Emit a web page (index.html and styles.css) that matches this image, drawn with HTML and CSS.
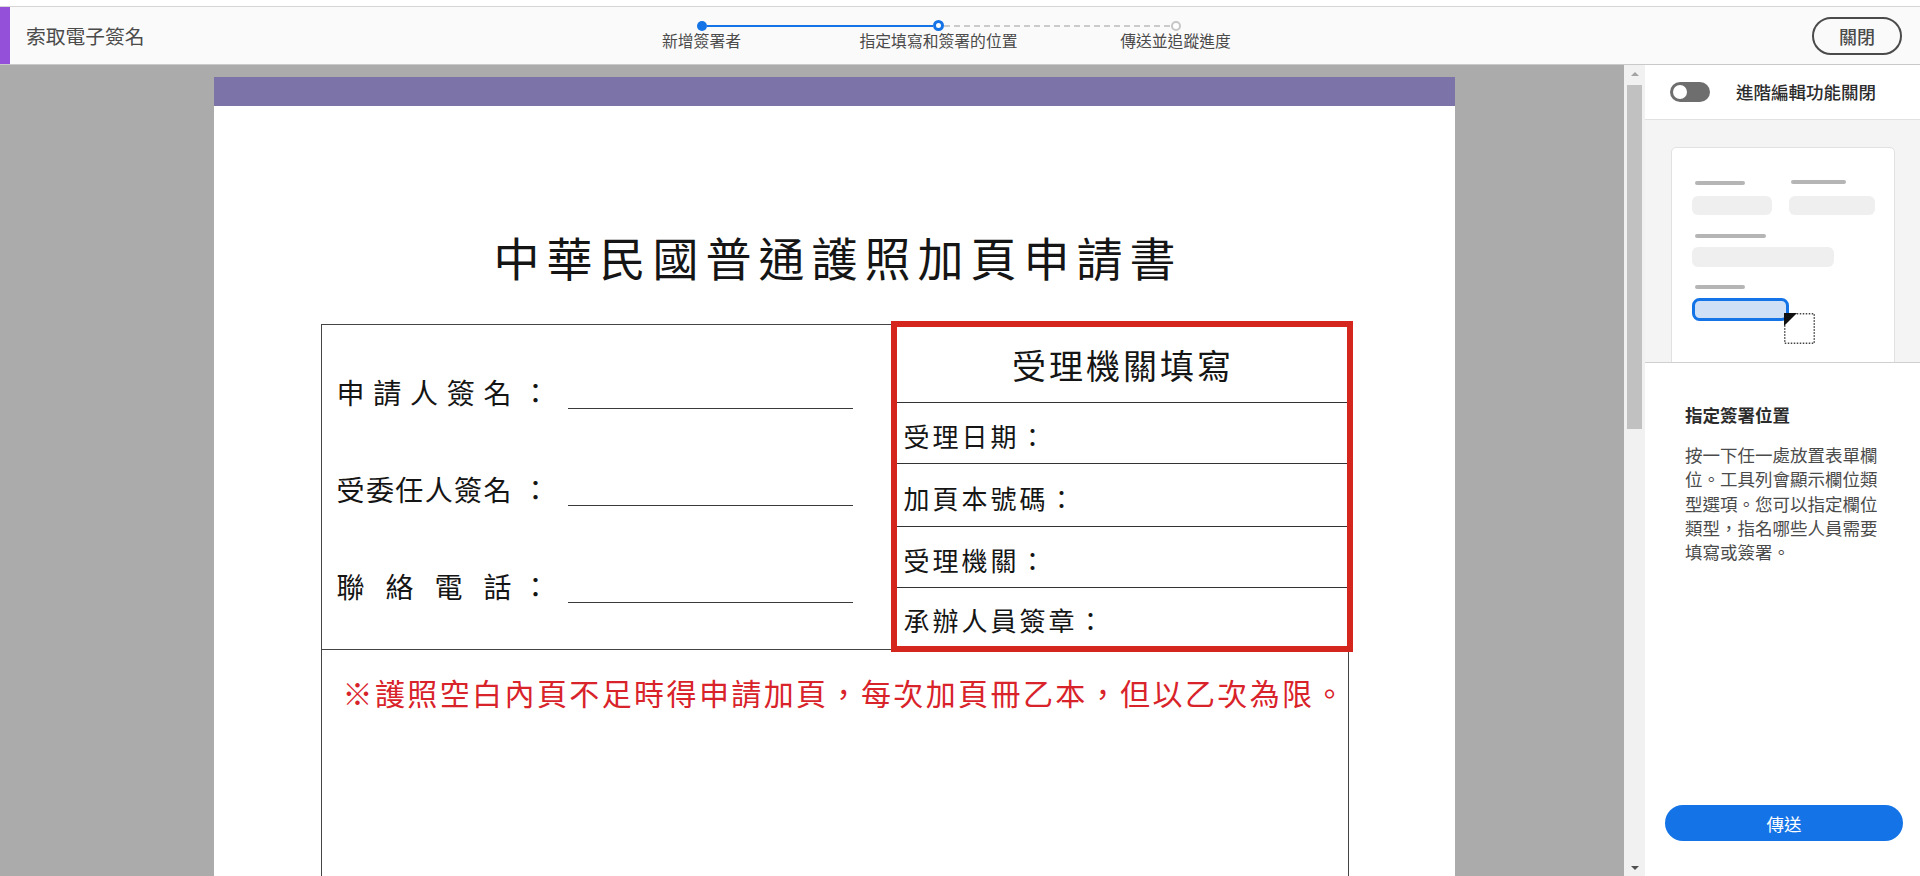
FILE: index.html
```html
<!DOCTYPE html>
<html lang="zh-Hant">
<head>
<meta charset="utf-8">
<title>索取電子簽名</title>
<link rel="stylesheet" href="styles.css">
</head>
<body>
<header class="appbar">
  <div class="brand">
    <span class="accent"></span>
    <span class="app-title">索取電子簽名</span>
  </div>
  <nav class="stepper">
    <div class="track">
      <span class="dot done"></span>
      <span class="seg solid"></span>
      <span class="dot current"></span>
      <span class="seg dashed"></span>
      <span class="dot todo"></span>
    </div>
    <div class="labels">
      <span>新增簽署者</span>
      <span>指定填寫和簽署的位置</span>
      <span>傳送並追蹤進度</span>
    </div>
  </nav>
  <button class="close-btn">關閉</button>
</header>

<main class="workspace">
  <section class="viewer">
    <div class="page">
      <h1 class="doc-title">中華民國普通護照加頁申請書</h1>
      <div class="form-table">
        <div class="form-top">
          <div class="sign-cell">
            <div class="sign-row">
              <span class="sign-label">申請人簽名</span><span class="colon">：</span><span class="sign-line"></span>
            </div>
            <div class="sign-row">
              <span class="sign-label">受委任人簽名</span><span class="colon">：</span><span class="sign-line"></span>
            </div>
            <div class="sign-row">
              <span class="sign-label">聯絡電話</span><span class="colon">：</span><span class="sign-line"></span>
            </div>
          </div>
          <div class="agency">
            <div class="agency-head">受理機關填寫</div>
            <div class="agency-row r1">受理日期：</div>
            <div class="agency-row r2">加頁本號碼：</div>
            <div class="agency-row r3">受理機關：</div>
            <div class="agency-row r4">承辦人員簽章：</div>
          </div>
        </div>
        <div class="notes">※護照空白內頁不足時得申請加頁，每次加頁冊乙本，但以乙次為限。</div>
      </div>
    </div>
  </section>

  <div class="scrollbar">
    <div class="sb-btn"><span class="arrow-up"></span></div>
    <div class="sb-thumb"></div>
    <div class="sb-space"></div>
    <div class="sb-btn"><span class="arrow-down"></span></div>
  </div>

  <aside class="panel">
    <div class="toggle-row">
      <span class="switch"><span class="knob"></span></span>
      <span class="toggle-label">進階編輯功能關閉</span>
    </div>
    <div class="preview">
      <div class="preview-card">
        <svg width="222" height="258" viewBox="1 1 222 258" xmlns="http://www.w3.org/2000/svg">
          <rect x="24" y="34" width="50" height="4" rx="2" fill="#b5b5b5"/>
          <rect x="120" y="33" width="55" height="4" rx="2" fill="#b5b5b5"/>
          <rect x="21" y="49" width="80" height="19" rx="6" fill="#efefef"/>
          <rect x="118" y="49" width="86" height="19" rx="6" fill="#efefef"/>
          <rect x="24" y="87" width="71" height="4" rx="2" fill="#b5b5b5"/>
          <rect x="21" y="100" width="142" height="20" rx="6" fill="#efefef"/>
          <rect x="24" y="138" width="50" height="4" rx="2" fill="#b5b5b5"/>
          <rect x="22.5" y="152.5" width="94" height="20" rx="6" fill="#cfe0f6" stroke="#1473e6" stroke-width="3"/>
          <rect x="113.75" y="166.75" width="29.5" height="29.5" fill="#ffffff" stroke="#444" stroke-width="1.5" stroke-dasharray="1.5 1.5"/>
          <polygon points="113,166 126,166 113,179" fill="#111"/>
        </svg>
      </div>
    </div>
    <div class="info">
      <div class="info-title">指定簽署位置</div>
      <p class="info-text">按一下任一處放置表單欄位。工具列會顯示欄位類型選項。您可以指定欄位類型，指名哪些人員需要填寫或簽署。</p>
      <button class="send-btn">傳送</button>
    </div>
  </aside>
</main>
</body>
</html>
```

FILE: styles.css
```css
* { box-sizing: border-box; }

html, body {
  margin: 0;
  padding: 0;
  background: #ffffff;
  font-family: "Noto Sans CJK TC", "Noto Sans", "Liberation Sans", sans-serif;
  overflow: hidden;
  height: 876px;
}

/* ---------- top bar ---------- */
.appbar {
  margin-top: 6px;
  height: 59px;
  border-top: 1px solid #d6d6d6;
  border-bottom: 1px solid #c9c9c9;
  background: #fafafa;
  display: grid;
  grid-template-columns: 583px 711px 1fr;
}

.brand {
  display: flex;
  align-items: center;
}

.accent {
  width: 10px;
  align-self: stretch;
  background: #9550da;
}

.app-title {
  margin-left: 16px;
  font-size: 19.75px;
  color: #4b4b4b;
  line-height: 24px;
}

.stepper {
  padding-top: 13px;
}

.track {
  display: flex;
  align-items: center;
  height: 11px;
  padding: 0 113.5px;
}

.dot {
  width: 10px;
  height: 10px;
  border-radius: 50%;
  flex: none;
}

.dot.done { background: #1473e6; }

.dot.current {
  width: 11px;
  height: 11px;
  border: 3px solid #1473e6;
  background: #ffffff;
}

.dot.todo {
  border: 2px solid #c6c6c6;
  background: #ffffff;
}

.seg {
  flex: 1;
  height: 2px;
}

.seg.solid { background: #1473e6; }

.seg.dashed {
  background: repeating-linear-gradient(90deg, #cbcbcb 0 6px, transparent 6px 10px);
}

.labels {
  display: grid;
  grid-template-columns: repeat(3, 1fr);
  text-align: center;
  font-size: 15.8px;
  line-height: 20px;
  color: #4b4b4b;
}

.close-btn {
  justify-self: end;
  align-self: center;
  margin-right: 18px;
  width: 90px;
  height: 38px;
  border: 2px solid #4b4b4b;
  border-radius: 19px;
  background: transparent;
  color: #4b4b4b;
  font-family: inherit;
  font-size: 18px;
  font-weight: 500;
  padding: 0;
}

/* ---------- workspace ---------- */
.workspace {
  display: flex;
  height: 811px;
}

.viewer {
  flex: 1;
  background: #ababab;
  overflow: hidden;
  padding: 12px 0 0 214px;
}

.page {
  width: 1241px;
  height: 1400px;
  background: #ffffff;
  border-top: 29px solid #7c73a8;
  color: #151515;
  overflow: hidden;
}

.doc-title {
  margin: 120px 0 0;
  font-size: 46px;
  font-weight: 400;
  line-height: 60px;
  letter-spacing: 7px;
  padding-left: 7px;
  text-align: center;
}

.form-table {
  width: 1028px;
  margin: 38px auto 0;
  border: 1px solid #444444;
  border-bottom: none;
}

.form-top {
  display: grid;
  grid-template-columns: 569px 1fr;
  grid-template-rows: 324px;
  border-bottom: 1px solid #444444;
}

.sign-cell {
  padding: 18px 0 0 15px;
}

.sign-row {
  height: 97px;
  display: flex;
  align-items: center;
  font-size: 28px;
  line-height: 34px;
}

.sign-label {
  width: 175px;
  text-align: justify;
  text-align-last: justify;
  white-space: nowrap;
}

.colon {
  width: 28px;
  margin-left: 10px;
  text-align: center;
}

.sign-line {
  width: 285px;
  height: 34px;
  margin-left: 18px;
  border-bottom: 1.5px solid #3a3a3a;
}

.agency {
  margin: -4px -5px -3px 0;
  border: 6px solid #d4261d;
  display: flex;
  flex-direction: column;
  background: #ffffff;
}

.agency-head {
  height: 76px;
  border-bottom: 1px solid #333333;
  display: flex;
  align-items: center;
  justify-content: center;
  font-size: 34px;
  letter-spacing: 3px;
  padding-left: 3px;
}

.agency-row {
  display: flex;
  align-items: center;
  padding: 5px 0 0 7px;
  font-size: 26px;
  letter-spacing: 3px;
  border-bottom: 1px solid #333333;
  white-space: nowrap;
}

.agency-row.r1 { height: 61px; }
.agency-row.r2 { height: 63px; }
.agency-row.r3 { height: 61px; }
.agency-row.r4 { flex: 1; border-bottom: none; }

.notes {
  height: 600px;
  padding: 24px 0 0 21px;
  font-size: 30px;
  line-height: 36px;
  letter-spacing: 2.4px;
  color: #d9232a;
  white-space: nowrap;
}

/* ---------- scrollbar ---------- */
.scrollbar {
  width: 21px;
  background: #f1f1f1;
  display: flex;
  flex-direction: column;
}

.sb-btn {
  height: 17px;
  display: flex;
  align-items: center;
  justify-content: center;
}

.arrow-up {
  width: 0;
  height: 0;
  border-left: 4px solid transparent;
  border-right: 4px solid transparent;
  border-bottom: 4px solid #a3a3a3;
}

.arrow-down {
  width: 0;
  height: 0;
  border-left: 4px solid transparent;
  border-right: 4px solid transparent;
  border-top: 4px solid #505050;
}

.sb-thumb {
  margin: 3px 3px 0;
  height: 344px;
  background: #c1c1c1;
}

.sb-space { flex: 1; }

/* ---------- right panel ---------- */
.panel {
  width: 275px;
  background: #ffffff;
  display: flex;
  flex-direction: column;
}

.toggle-row {
  height: 55px;
  border-bottom: 1px solid #e1e1e1;
  display: flex;
  align-items: center;
  padding-left: 25px;
  gap: 26px;
}

.switch {
  width: 40px;
  height: 20px;
  border-radius: 10px;
  background: #6e6e6e;
  display: flex;
  align-items: center;
  padding: 0 3px;
}

.knob {
  width: 14px;
  height: 14px;
  border-radius: 50%;
  background: #ffffff;
}

.toggle-label {
  font-size: 17.5px;
  font-weight: 500;
  color: #2c2c2c;
  line-height: 24px;
}

.preview {
  height: 243px;
  background: #f4f4f4;
  border-bottom: 1px solid #d0d0d0;
  overflow: hidden;
  padding: 27px 25px 0 26px;
}

.preview-card {
  height: 260px;
  background: #ffffff;
  border: 1px solid #e1e1e1;
  border-radius: 5px;
}

.preview-card svg { display: block; }

.info {
  flex: 1;
  display: flex;
  flex-direction: column;
  padding: 40px 0 35px 40px;
}

.info-title {
  font-size: 17.5px;
  font-weight: 700;
  line-height: 24px;
  color: #2c2c2c;
}

.info-text {
  margin: 16px 0 0;
  width: 200px;
  font-size: 17.5px;
  line-height: 24.3px;
  color: #4b4b4b;
}

.send-btn {
  margin-top: auto;
  margin-left: -20px;
  width: 238px;
  height: 36px;
  border: none;
  border-radius: 18px;
  background: #1473e6;
  color: #ffffff;
  font-family: inherit;
  font-size: 17.5px;
  padding: 0;
}
```
